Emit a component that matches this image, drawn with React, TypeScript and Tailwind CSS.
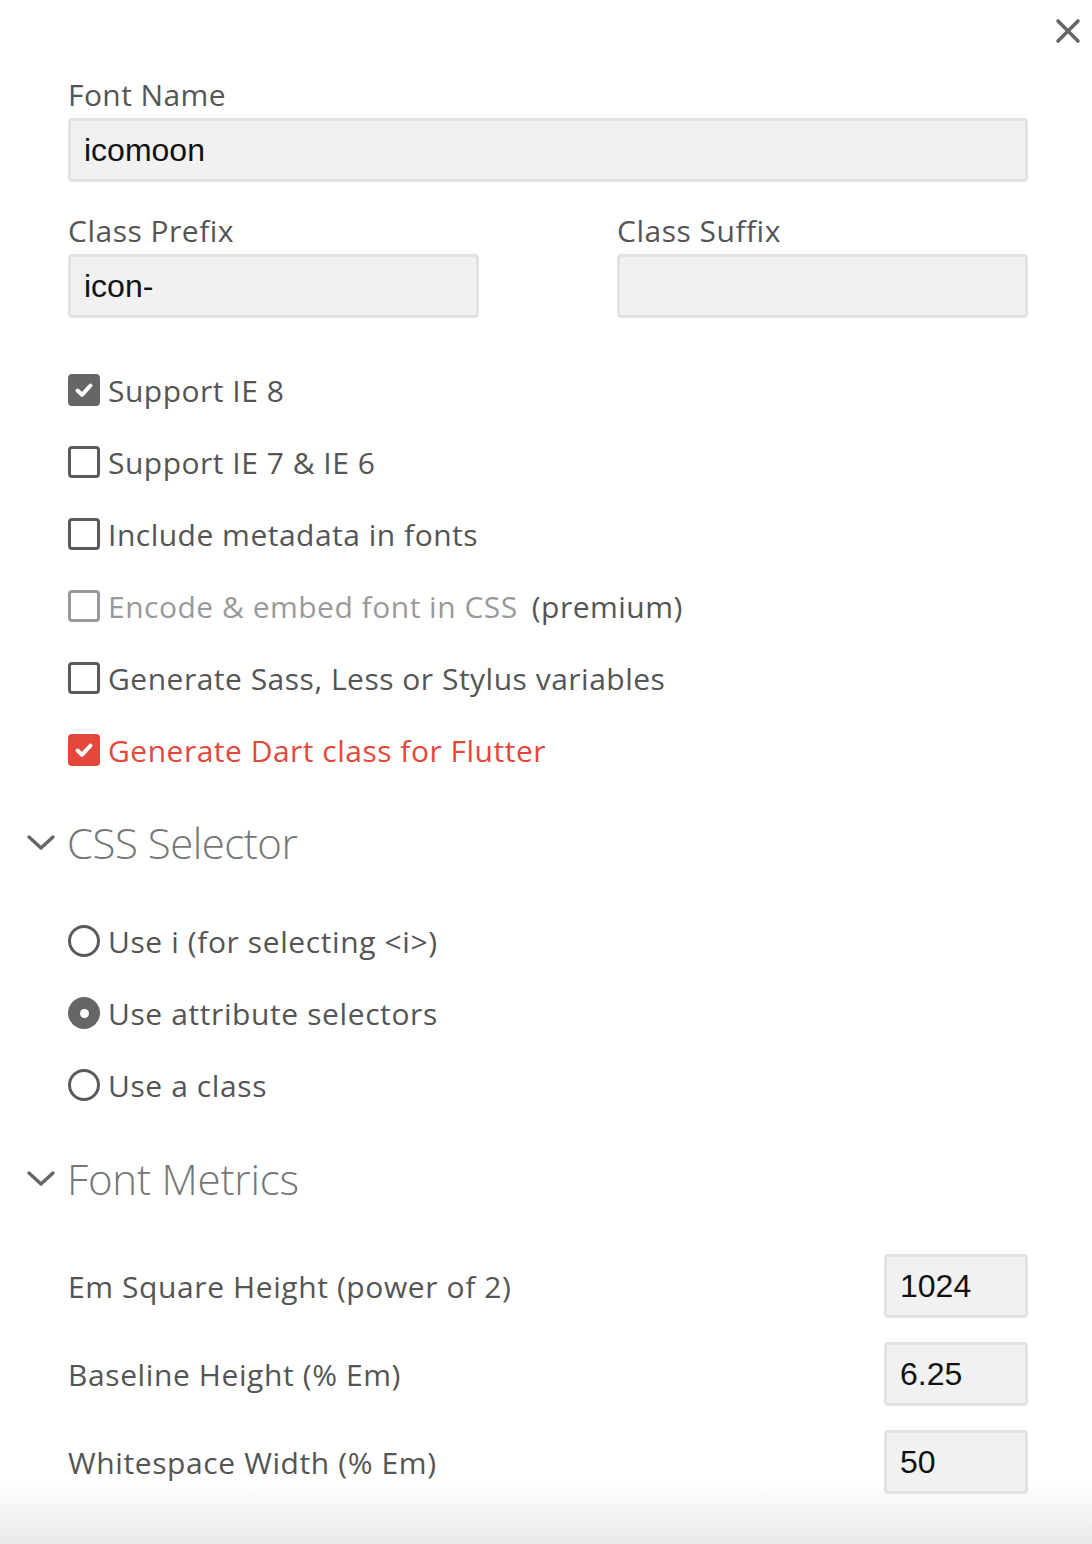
import React from "react";

const UI = "font-['Open_Sans','Noto_Sans',sans-serif]";
const ARIAL = "font-['Liberation_Sans',Arial,sans-serif]";

function Check({ state }: { state: "on" | "off" | "disabled" | "red" }) {
  if (state === "on" || state === "red") {
    return (
      <span
        className={`flex h-[32px] w-[32px] shrink-0 items-center justify-center rounded-[4px] ${
          state === "red" ? "bg-[#e5473a]" : "bg-[#666666]"
        }`}
      >
        <svg width="22" height="22" viewBox="0 0 22 22">
          <path d="M4.5 11.5 L9 15.8 L17.5 6.5" fill="none" stroke="#ffffff" strokeWidth="4" strokeLinecap="round" strokeLinejoin="round" />
        </svg>
      </span>
    );
  }
  return (
    <span
      className={`h-[32px] w-[32px] shrink-0 rounded-[4px] border-[3px] ${
        state === "disabled" ? "border-[#9a9a9a]" : "border-[#5a5a5a]"
      }`}
    />
  );
}

function Radio({ on }: { on?: boolean }) {
  if (on)
    return (
      <span className="flex h-[32px] w-[32px] shrink-0 items-center justify-center rounded-full bg-[#666666]">
        <span className="h-[9px] w-[9px] rounded-full bg-white" />
      </span>
    );
  return <span className="h-[32px] w-[32px] shrink-0 rounded-full border-[3px] border-[#5a5a5a]" />;
}

function Chevron() {
  return (
    <svg width="30" height="20" viewBox="0 0 30 20" className="shrink-0">
      <path d="M3 5 L15 16 L27 5" fill="none" stroke="#666666" strokeWidth="3.4" strokeLinecap="round" strokeLinejoin="round" />
    </svg>
  );
}

function Field({ value, className }: { value: string; className?: string }) {
  return (
    <div
      className={`flex h-[64px] items-center rounded-[4px] border-[3px] border-[#e2e2e2] bg-[#f1f1f1] pl-[13px] ${ARIAL} text-[32px] text-[#111111] ${className ?? ""}`}
    >
      {value}
    </div>
  );
}

export default function App() {
  const checks: { label: React.ReactNode; state: "on" | "off" | "disabled" | "red" }[] = [
    { label: "Support IE 8", state: "on" },
    { label: "Support IE 7 & IE 6", state: "off" },
    { label: "Include metadata in fonts", state: "off" },
    {
      label: (
        <>
          <span className="text-[#9a9a9a]">Encode &amp; embed font in CSS</span>
          <span className="ml-[14px] text-[#555555]">(premium)</span>
        </>
      ),
      state: "disabled",
    },
    { label: "Generate Sass, Less or Stylus variables", state: "off" },
    { label: <span className="text-[#e5473a]">Generate Dart class for Flutter</span>, state: "red" },
  ];

  return (
    <div className={`relative min-h-[1544px] w-[1092px] overflow-hidden bg-white ${UI} text-[#555555]`}>
      <button className="absolute right-[10px] top-[17px] flex h-[28px] w-[28px] items-center justify-center">
        <svg width="26" height="26" viewBox="0 0 26 26">
          <path d="M3 3 L23 23 M23 3 L3 23" stroke="#666666" strokeWidth="3.6" strokeLinecap="round" />
        </svg>
      </button>

      <div className="pl-[68px] pr-[64px] pt-[77px]">
        <div className="h-[36px] text-[30px] leading-[36px] tracking-[0.4px]">Font Name</div>
        <Field value="icomoon" className="mt-[5px]" />

        <div className="mt-[31px] grid grid-cols-[411px_1fr] gap-x-[138px]">
          <div>
            <div className="h-[36px] text-[30px] leading-[36px] tracking-[0.5px]">Class Prefix</div>
            <Field value="icon-" className="mt-[5px]" />
          </div>
          <div>
            <div className="h-[36px] text-[30px] leading-[36px] tracking-[0.5px]">Class Suffix</div>
            <Field value="" className="mt-[5px]" />
          </div>
        </div>

        <div className="mt-[36px] flex flex-col">
          {checks.map((c, i) => (
            <div key={i} className="flex h-[72px] items-center gap-[8px] text-[30px] tracking-[0.5px]">
              <Check state={c.state} />
              <span className="whitespace-nowrap">{c.label}</span>
            </div>
          ))}
        </div>
      </div>

      <div className="mt-[26px] flex h-[60px] items-center gap-[11px] pl-[26px] text-[42px] font-light tracking-[-0.5px] text-[#777777]">
        <Chevron />
        <span>CSS Selector</span>
      </div>

      <div className="mt-[33px] flex flex-col pl-[68px]">
        {[
          { label: "Use i (for selecting <i>)", on: false },
          { label: "Use attribute selectors", on: true },
          { label: "Use a class", on: false },
        ].map((r, i) => (
          <div key={i} className="flex h-[72px] items-center gap-[8px] text-[30px] tracking-[0.6px]">
            <Radio on={r.on} />
            <span className="whitespace-nowrap">{r.label}</span>
          </div>
        ))}
      </div>

      <div className="mt-[27px] flex h-[60px] items-center gap-[11px] pl-[26px] text-[42px] font-light tracking-[-0.2px] text-[#777777]">
        <Chevron />
        <span>Font Metrics</span>
      </div>

      <div className="mt-[46px] flex flex-col gap-[24px] pl-[68px] pr-[64px]">
        {[
          { label: "Em Square Height (power of 2)", value: "1024" },
          { label: "Baseline Height (% Em)", value: "6.25" },
          { label: "Whitespace Width (% Em)", value: "50" },
        ].map((m, i) => (
          <div key={i} className="flex h-[64px] items-center justify-between">
            <span className="text-[30px] tracking-[0.6px]">{m.label}</span>
            <Field value={m.value} className="w-[144px]" />
          </div>
        ))}
      </div>

      <div className="pointer-events-none absolute bottom-0 left-0 h-[64px] w-full bg-gradient-to-b from-[rgba(238,238,238,0)] to-[#e9e9e9]" />
    </div>
  );
}
